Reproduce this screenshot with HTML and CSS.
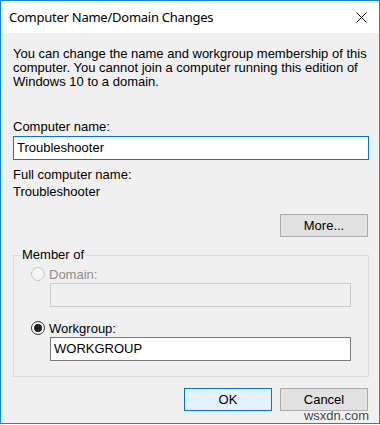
FILE: index.html
```html
<!DOCTYPE html>
<html lang="en">
<head>
    <meta charset="UTF-8">
    <title>Computer Name/Domain Changes</title>
    <link rel="stylesheet" href="styles.css">
</head>
<body>
    <div class="window">
        <div class="titlebar">
            <span class="title">Computer Name/Domain Changes</span>
            <svg class="close" width="11" height="11" viewBox="0 0 11 11">
                <path d="M0.5 0.5 L10.5 10.5 M10.5 0.5 L0.5 10.5" stroke="#111" stroke-width="1" fill="none"/>
            </svg>
        </div>

        <div class="content">
            <p class="intro">You can change the name and workgroup membership of this computer. You cannot join a computer running this edition of Windows 10 to a domain.</p>

            <div class="label">Computer name:</div>
            <div class="textbox focused">Troubleshooter</div>

            <div class="label full-label">Full computer name:</div>
            <div class="full-name">Troubleshooter</div>

            <div class="more-row">
                <button class="btn">More...</button>
            </div>

            <!-- Grupo "Member of" -->
            <fieldset class="member">
                <legend>Member of</legend>
                <div class="member-inner">
                    <div class="radio-row disabled">
                        <span class="radio"></span>
                        <span>Domain:</span>
                    </div>
                    <div class="textbox indent disabled-box"></div>

                    <div class="radio-row workgroup">
                        <span class="radio checked"></span>
                        <span>Workgroup:</span>
                    </div>
                    <div class="textbox indent">WORKGROUP</div>
                </div>
            </fieldset>

            <div class="actions">
                <button class="btn default">OK</button>
                <button class="btn">Cancel</button>
            </div>
        </div>

        <span class="watermark">wsxdn.com</span>
    </div>
</body>
</html>
```

FILE: styles.css
```css
body {
    margin: 0;
    background: #ffffff;
    font-family: "Liberation Sans", Arial, sans-serif;
    font-size: 13px;
    color: #000;
}
.window {
    position: relative;
    width: 378px;
    height: 422px;
    border: 1px solid #1883d7;
    background: #f0f0f0;
}
.titlebar {
    display: flex;
    align-items: center;
    justify-content: space-between;
    height: 32px;
    background: #fff;
    padding: 0 12px 0 8px;
}
.title {
    font-family: "Noto Sans", sans-serif;
    font-size: 13px;
    letter-spacing: -0.25px;
    color: #000;
}
.close {
    display: block;
}
.content {
    padding: 14px 10px 0 12px;
}
.intro {
    margin: 0;
    line-height: 14px;
}
.label {
    margin-top: 31px;
    line-height: 14px;
}
.textbox {
    box-sizing: border-box;
    height: 24px;
    margin-top: 2px;
    background: #fff;
    border: 1px solid #7a7a7a;
    padding: 0 3px;
    line-height: 22px;
}
.textbox.focused {
    border-color: #0078d7;
}
.full-label {
    margin-top: 8px;
}
.full-name {
    margin-top: 3px;
    line-height: 14px;
}
.more-row {
    display: flex;
    justify-content: flex-end;
    margin-top: 15px;
    padding-right: 1px;
}
.btn {
    box-sizing: border-box;
    width: 88px;
    height: 23px;
    margin: 0;
    padding: 0;
    font-family: "Liberation Sans", Arial, sans-serif;
    font-size: 13px;
    color: #000;
    background: #e1e1e1;
    border: 1px solid #adadad;
}
.btn.default {
    background: #e5f1fb;
    border-color: #0078d7;
}
.member {
    margin: 11px 0 0 0;
    padding: 0 0 15px 6px;
    border: 1px solid #dcdcdc;
}
.member legend {
    padding: 0 2px;
    line-height: 14px;
}
.member-inner {
    padding: 5px 17px 0 11px;
}
.radio-row {
    display: flex;
    align-items: center;
    gap: 4px;
    height: 14px;
}
.radio-row.disabled {
    color: #8d8d8d;
}
.radio {
    box-sizing: border-box;
    width: 14px;
    height: 14px;
    border-radius: 50%;
    border: 1px solid #333;
    background: #fff;
    display: flex;
    align-items: center;
    justify-content: center;
}
.disabled .radio {
    border-color: #c8c8c8;
    background: #f4f4f4;
}
.radio.checked::after {
    content: "";
    width: 8px;
    height: 8px;
    border-radius: 50%;
    background: #222;
}
.indent {
    margin-left: 19px;
}
.disabled-box {
    background: #f0f0f0;
    border-color: #cccccc;
}
.workgroup {
    margin-top: 14px;
}
.actions {
    display: flex;
    justify-content: flex-end;
    gap: 8px;
    margin-top: 11px;
    padding-right: 1px;
}
.watermark {
    position: absolute;
    right: 10px;
    bottom: 1px;
    font-family: "Liberation Sans", Arial, sans-serif;
    font-size: 13px;
    line-height: 12px;
    color: #444;
    text-shadow: 0 0 2px #fff, 0 0 2px #fff;
}
```
